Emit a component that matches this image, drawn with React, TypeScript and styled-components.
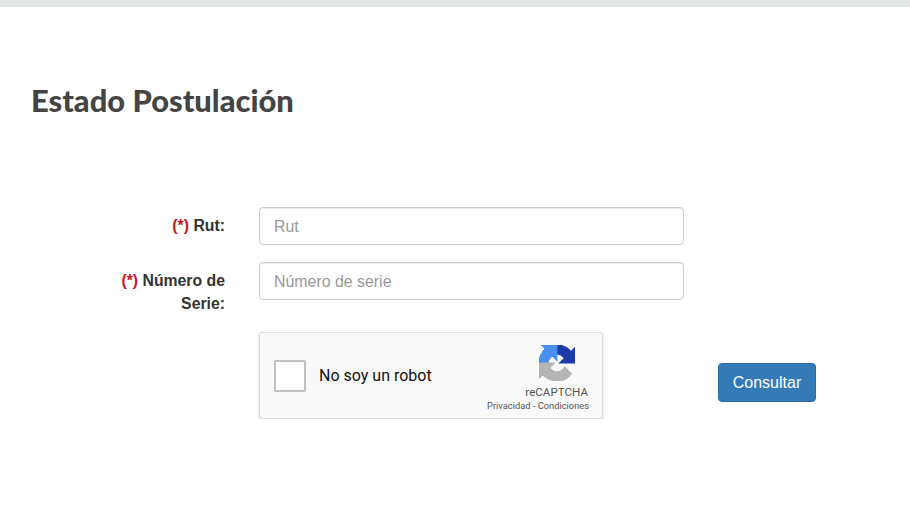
import React from 'react';
import styled, { createGlobalStyle } from 'styled-components';

const GlobalStyle = createGlobalStyle`
  html, body {
    margin: 0;
    background: #fff;
    font-family: "Liberation Sans", Arial, sans-serif;
  }
`;

const TopBar = styled.div`
  height: 7px;
  background: #e2e6e5;
`;

const Title = styled.h1`
  margin: 0;
  padding: 75px 0 0 31px;
  font-family: "Lato", "Open Sans", sans-serif;
  font-size: 30.9px;
  line-height: 38px;
  font-weight: 900;
  color: #444;
`;

const Form = styled.form`
  display: grid;
  grid-template-columns: 225px 425px 98px;
  column-gap: 34px;
  row-gap: 17px;
  margin-top: 87px;
`;

const Label = styled.label`
  padding: 8px 0 0 100px;
  font-size: 15.8px;
  line-height: 22.5px;
  font-weight: 700;
  color: #333;
  text-align: right;
`;

const Required = styled.span`
  color: #c9141c;
`;

const Field = styled.input`
  box-sizing: border-box;
  width: 100%;
  height: 38px;
  padding: 1px 14px 0;
  border: 1px solid #ccc;
  border-radius: 4px;
  box-shadow: inset 0 1px 1px rgba(0, 0, 0, 0.075);
  font: 15.9px "Liberation Sans", Arial, sans-serif;
  color: #555;

  &::placeholder {
    color: #999;
    opacity: 1;
  }
`;

const Spacer = styled.div``;

const Captcha = styled.div`
  box-sizing: border-box;
  width: 344px;
  height: 87px;
  display: flex;
  align-items: center;
  padding: 0 13px 0 14px;
  border: 1px solid #dcdcdc;
  border-radius: 3px;
  background: #f9f9f9;
  box-shadow: 0 1px 3px rgba(0, 0, 0, 0.16);
`;

const CheckBox = styled.div`
  box-sizing: border-box;
  width: 32px;
  height: 32px;
  border: 2px solid #c1c1c1;
  border-radius: 2px;
  background: #fff;
`;

const CaptchaText = styled.span`
  margin-left: 13px;
  font-family: "Roboto", "Liberation Sans", sans-serif;
  font-size: 16px;
  color: #111;
`;

const Brand = styled.div`
  margin-left: auto;
  display: flex;
  flex-direction: column;
  align-items: flex-end;
  padding-top: 6px;

  svg {
    margin-right: 14px;
  }
`;

const BrandName = styled.span`
  margin-top: 4px;
  padding-right: 1px;
  font-family: "Roboto", "Liberation Sans", sans-serif;
  font-size: 11.6px;
  line-height: 14px;
  color: #555;
`;

const BrandLinks = styled.span`
  font-family: "Roboto", "Liberation Sans", sans-serif;
  font-size: 9.3px;
  line-height: 13px;
  color: #555;
`;

const Submit = styled.button`
  align-self: start;
  margin-top: 31px;
  height: 39px;
  border: 1px solid #2e6da4;
  border-radius: 4px;
  background: #337ab7;
  color: #fff;
  font: 16px "Liberation Sans", Arial, sans-serif;
`;

const CaptchaLogo = () => (
  <svg width="36" height="36" viewBox="0 0 64 64">
    <path d="M64 31.955l-.033-1.37V4.687l-7.16 7.16C50.948 4.674 42.033.093 32.05.093c-10.4 0-19.622 4.96-25.458 12.64l11.736 11.86a15.55 15.55 0 0 1 4.754-5.334c2.05-1.6 4.952-2.906 8.968-2.906.485 0 .86.057 1.135.163 4.976.393 9.288 3.14 11.828 7.124l-8.307 8.307c10.522-.04 22.4-.066 27.295.005" fill="#1c3aa9" stroke="#1c3aa9" strokeWidth="2" />
    <path d="M31.862.094l-1.37.033H4.594l7.16 7.16C4.58 13.147 0 22.06 0 32.046c0 10.4 4.96 19.622 12.64 25.458l11.86-11.736a15.55 15.55 0 0 1-5.334-4.754c-1.6-2.05-2.906-4.952-2.906-8.968 0-.485.057-.86.163-1.135.393-4.976 3.14-9.288 7.124-11.828l8.307 8.307c-.04-10.522-.066-22.4.005-27.295" fill="#4a90f2" stroke="#4a90f2" strokeWidth="2" />
    <path d="M.001 32l.033 1.37v25.898l7.16-7.16c5.86 7.173 14.774 11.753 24.76 11.753 10.4 0 19.622-4.96 25.458-12.64l-11.86-11.736a15.55 15.55 0 0 1-4.754 5.334c-2.05 1.6-4.952 2.906-8.968 2.906-.485 0-.86-.057-1.135-.163-4.976-.393-9.288-3.14-11.828-7.124l8.307-8.307c-10.522.04-22.4.066-27.295-.005" fill="#b4b4b4" stroke="#b4b4b4" strokeWidth="2" />
  </svg>
);

export default function App() {
  return (
    <>
      <GlobalStyle />
      <TopBar />
      <Title>Estado Postulación</Title>
      <Form onSubmit={(e) => e.preventDefault()}>
        <Label htmlFor="rut">
          <Required>(*)</Required> Rut:
        </Label>
        <Field id="rut" placeholder="Rut" />
        <Spacer />

        <Label htmlFor="serie">
          <Required>(*)</Required> Número de Serie:
        </Label>
        <Field id="serie" placeholder="Número de serie" />
        <Spacer />

        <Spacer />
        <Captcha>
          <CheckBox />
          <CaptchaText>No soy un robot</CaptchaText>
          <Brand>
            <CaptchaLogo />
            <BrandName>reCAPTCHA</BrandName>
            <BrandLinks>Privacidad - Condiciones</BrandLinks>
          </Brand>
        </Captcha>
        <Submit type="submit">Consultar</Submit>
      </Form>
    </>
  );
}
